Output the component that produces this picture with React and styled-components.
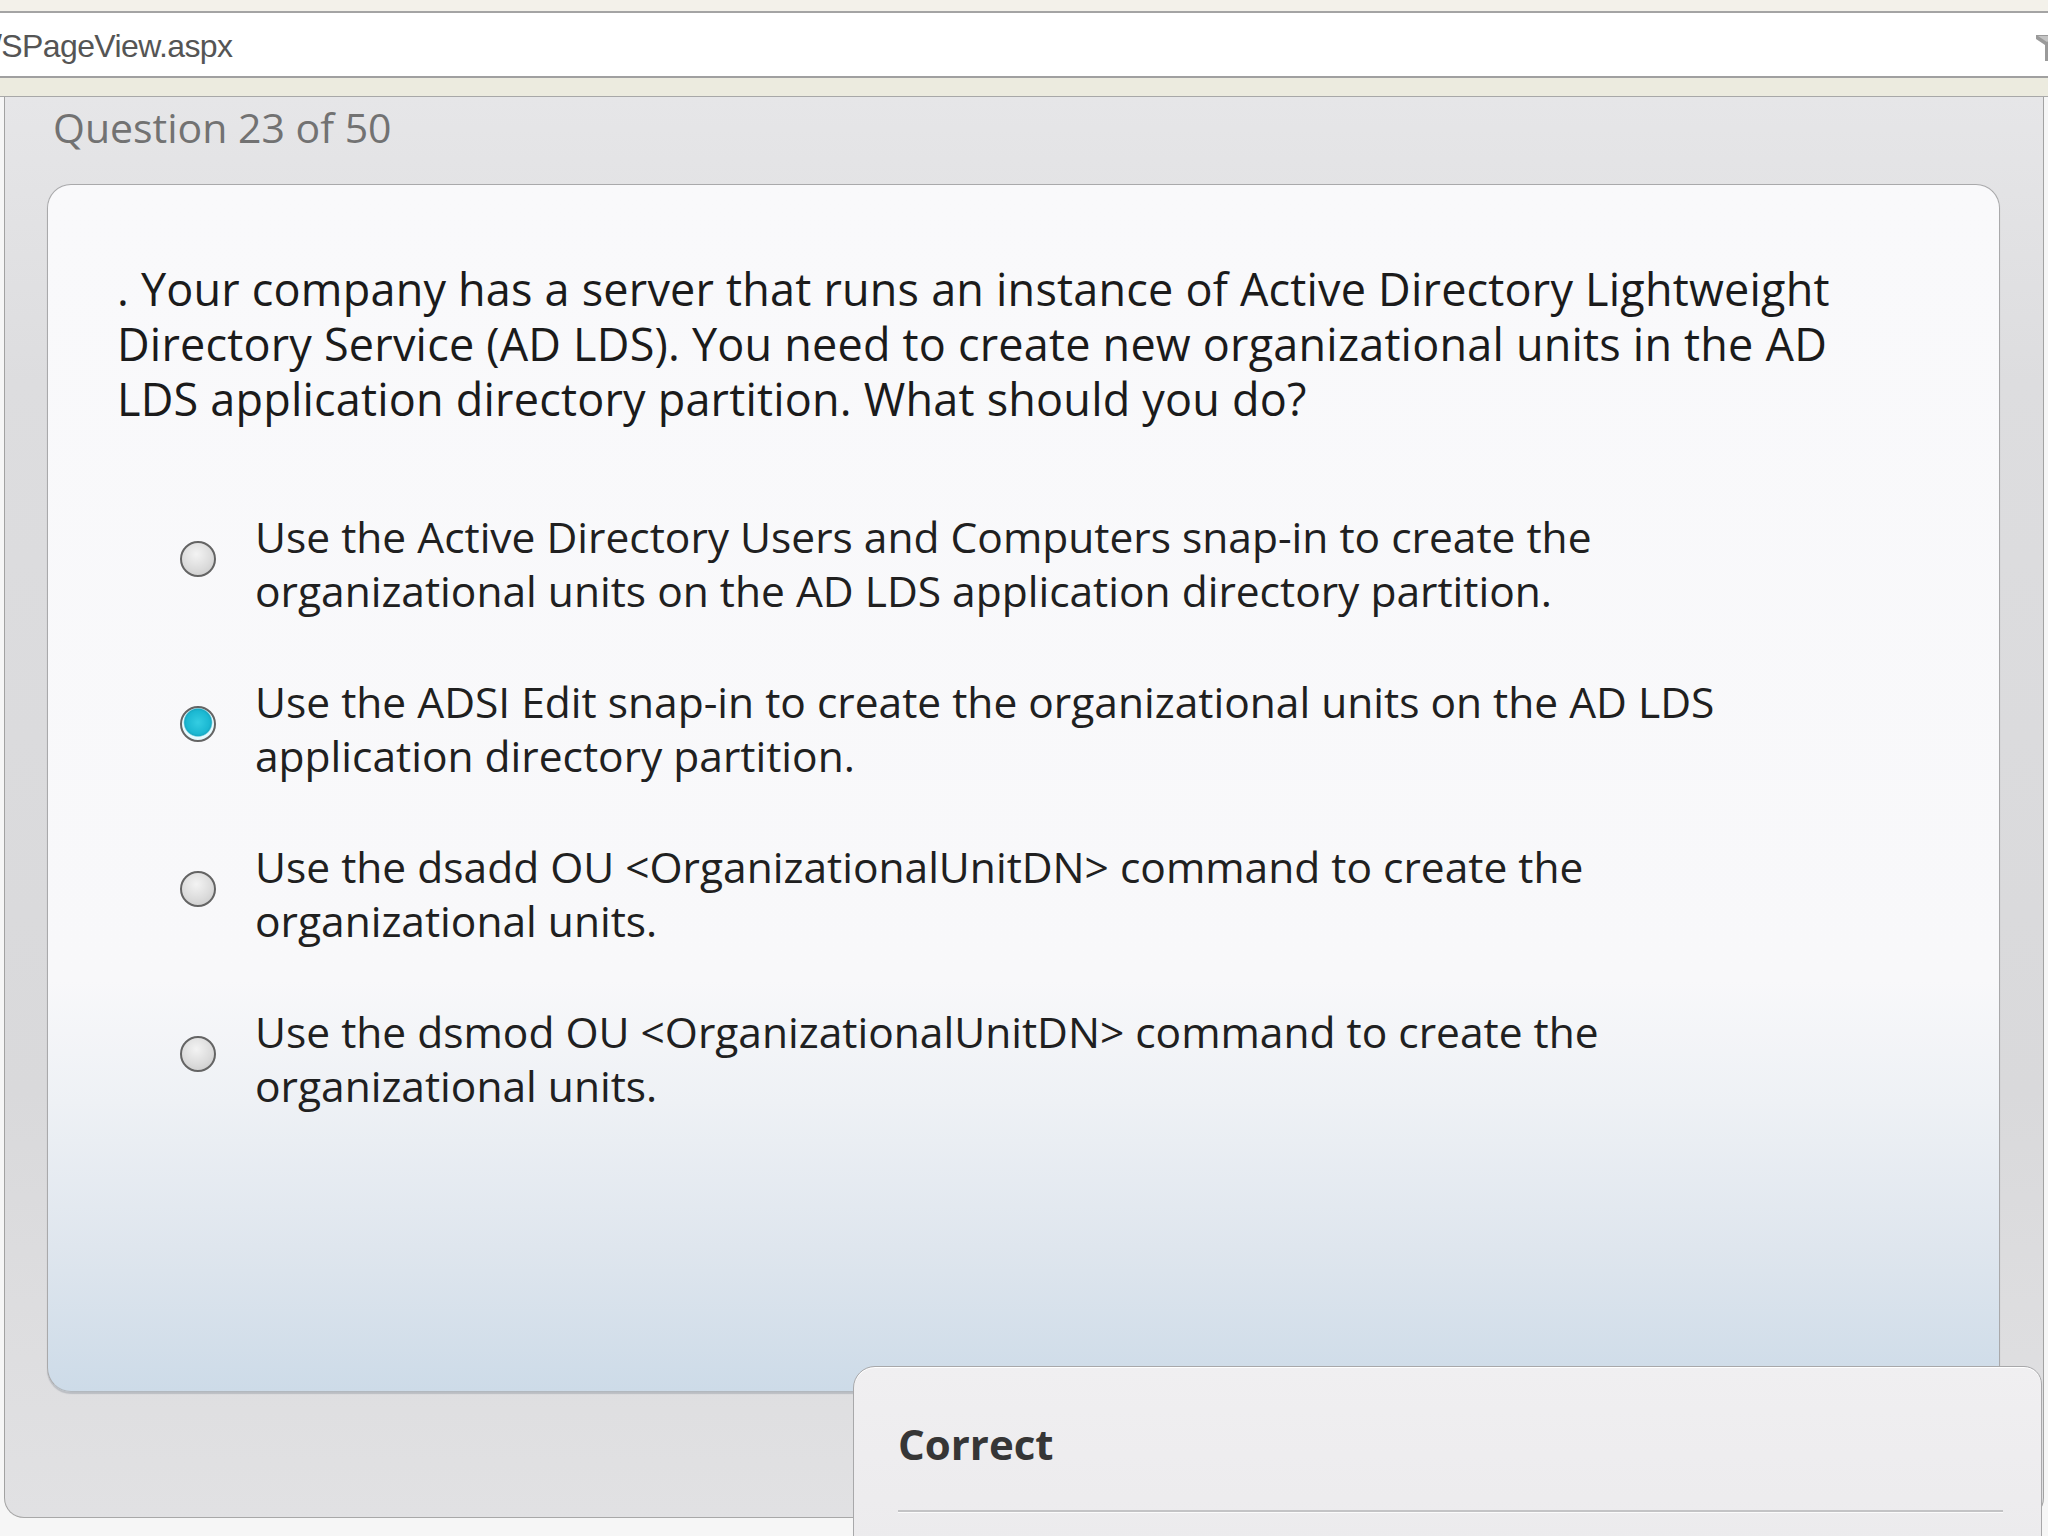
import React from "react";
import styled, { createGlobalStyle } from "styled-components";

const Global = createGlobalStyle`
  html, body { margin: 0; padding: 0; background: #f5f5f5; }
  body { font-family: "Open Sans", "Noto Sans", sans-serif; }
`;

const Screen = styled.div`
  position: relative;
  width: 2048px;
  height: 1536px;
  overflow: hidden;
  background: #f6f6f6;
  display: flex;
  flex-direction: column;
`;

const TopStrip = styled.div`
  height: 11px;
  background: #f3f1ea;
  border-bottom: 2px solid #a4a4a4;
`;

const AddressBar = styled.div`
  height: 63px;
  background: #ffffff;
  border-bottom: 2px solid #a0a0a0;
  display: flex;
  align-items: center;
  justify-content: space-between;
  overflow: hidden;
`;

const Url = styled.span`
  font-family: "Liberation Sans", Arial, sans-serif;
  font-size: 32px;
  color: #555555;
  margin-left: -7px;
  margin-top: 4px;
  letter-spacing: -0.6px;
`;

const UrlIcon = styled.svg`
  width: 22px;
  height: 32px;
  margin-right: -9px;
  margin-top: 4px;
`;

const BeigeStrip = styled.div`
  height: 18px;
  background: #ecebdf;
  border-bottom: 1px solid #a8a8a8;
`;

const Frame = styled.div`
  margin-left: 4px;
  width: 2040px;
  box-sizing: border-box;
  height: 1421px;
  border-left: 1px solid #a2a2a2;
  border-right: 1px solid #a2a2a2;
  border-bottom: 1px solid #a8a8a8;
  border-radius: 0 0 20px 20px;
  background: linear-gradient(to bottom, #e6e6e8 0%, #dddddf 20%, #d9d9db 70%, #e1e1e3 100%);
  display: flex;
  flex-direction: column;
`;

const Title = styled.div`
  padding: 7px 0 0 48px;
  height: 87px;
  box-sizing: border-box;
  font-size: 41px;
  line-height: 46px;
  color: #727272;
`;

const Card = styled.div`
  margin: 0 43px 0 42px;
  height: 1208px;
  box-sizing: border-box;
  border: 1px solid #a9a9ab;
  border-bottom-color: #b2b8be;
  border-radius: 24px;
  background: linear-gradient(
    to bottom,
    #f9f9fb 0%,
    #f8f8fa 66%,
    #eef1f5 76%,
    #dfe6ee 88%,
    #cddbe8 100%
  );
  box-shadow: 0 2px 1px rgba(120, 130, 140, 0.35);
  padding: 76px 0 0 69px;
`;

const Question = styled.div`
  font-size: 45px;
  line-height: 55px;
  letter-spacing: 0.2px;
  color: #1b1b1b;
`;

const Line = styled.span`
  display: block;
  white-space: nowrap;
`;

const Options = styled.div`
  margin-top: 84px;
  margin-left: 63px;
  display: flex;
  flex-direction: column;
  gap: 57px;
`;

const Option = styled.div`
  display: flex;
  align-items: flex-start;
  gap: 39px;
`;

const Radio = styled.span`
  flex: none;
  width: 36px;
  height: 36px;
  margin-top: 31px;
  box-sizing: border-box;
  border-radius: 50%;
  border: 2px solid #646464;
  background: ${(p) =>
    p.$checked
      ? "radial-gradient(circle at 50% 45%, #34cde2 0%, #1bb8d2 48%, #17aac4 56%, #e9fbff 62%, #d4eef4 100%)"
      : "radial-gradient(circle at 45% 35%, #f3f3f3 0%, #dcdcdc 55%, #c6c6c6 100%)"};
`;

const OptionText = styled.div`
  font-size: 42.5px;
  line-height: 54px;
  color: #202020;
`;

const Feedback = styled.div`
  position: absolute;
  left: 853px;
  top: 1366px;
  width: 1189px;
  height: 220px;
  box-sizing: border-box;
  border: 1px solid #a8a8aa;
  border-radius: 22px 18px 0 0;
  background: linear-gradient(to bottom, #f0eff1 0%, #ebeaec 100%);
  box-shadow: inset 0 1px 0 #ffffff;
  padding: 52px 38px 0 44px;
`;

const FeedbackTitle = styled.div`
  font-size: 42px;
  line-height: 50px;
  font-weight: 700;
  color: #363636;
`;

const Divider = styled.div`
  margin-top: 41px;
  border-top: 2px solid #c3c3c5;
  border-bottom: 1px solid #fbfbfb;
`;

const options = [
  {
    lines: [
      "Use the Active Directory Users and Computers snap-in to create the",
      "organizational units on the AD LDS application directory partition.",
    ],
  },
  {
    checked: true,
    lines: [
      "Use the ADSI Edit snap-in to create the organizational units on the AD LDS",
      "application directory partition.",
    ],
  },
  {
    lines: [
      "Use the dsadd OU <OrganizationalUnitDN> command to create the",
      "organizational units.",
    ],
  },
  {
    lines: [
      "Use the dsmod OU <OrganizationalUnitDN> command to create the",
      "organizational units.",
    ],
  },
];

export default function App() {
  return (
    <>
      <Global />
      <Screen>
        <TopStrip />
        <AddressBar>
          <Url>/SPageView.aspx</Url>
          <UrlIcon viewBox="0 0 22 32">
            <path d="M1 4 L21 4 L21 8 L14 14 L14 30 L10 30 L10 14 L1 8 Z" fill="#9a9a9a" />
            <path d="M3 5 L19 5 L12 11 Z" fill="#c4c4c4" />
          </UrlIcon>
        </AddressBar>
        <BeigeStrip />
        <Frame>
          <Title>Question 23 of 50</Title>
          <Card>
            <Question>
              <Line>. Your company has a server that runs an instance of Active Directory Lightweight</Line>
              <Line>Directory Service (AD LDS). You need to create new organizational units in the AD</Line>
              <Line>LDS application directory partition. What should you do?</Line>
            </Question>
            <Options>
              {options.map((o, i) => (
                <Option key={i}>
                  <Radio $checked={o.checked} />
                  <OptionText>
                    {o.lines.map((l, j) => (
                      <Line key={j}>{l}</Line>
                    ))}
                  </OptionText>
                </Option>
              ))}
            </Options>
          </Card>
        </Frame>
        <Feedback>
          <FeedbackTitle>Correct</FeedbackTitle>
          <Divider />
        </Feedback>
      </Screen>
    </>
  );
}
